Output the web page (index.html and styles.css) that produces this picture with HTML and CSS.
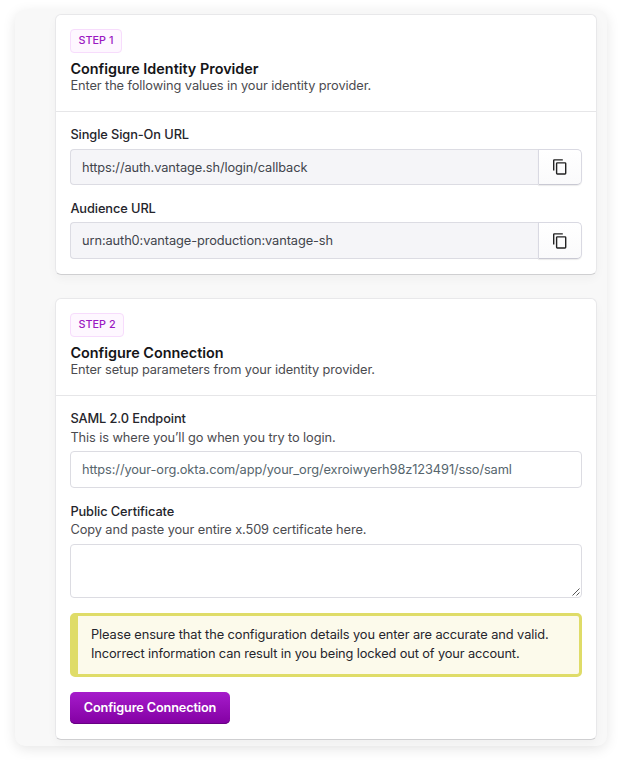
FILE: index.html
```html
<!DOCTYPE html>
<html lang="en">
<head>
<meta charset="utf-8">
<title>Configure SSO</title>
<link rel="stylesheet" href="styles.css">
</head>
<body>
<main class="panel">
  <section class="card">
    <header class="card-head">
      <span class="badge">STEP 1</span>
      <h2>Configure Identity Provider</h2>
      <p>Enter the following values in your identity provider.</p>
    </header>
    <div class="card-body">
      <label class="label">Single Sign-On URL</label>
      <div class="copy-field">
        <div class="value">https://auth.vantage.sh/login/callback</div>
        <button class="copy" type="button" aria-label="Copy"><svg width="16" height="18" viewBox="0 0 16 18" fill="none" stroke="#222" stroke-width="1.4"><path d="M1.7 12.4V2.4Q1.7 1.9 2.2 1.9H10.8"/><rect x="4.6" y="4.9" width="9.1" height="11.1" rx=".7"/></svg></button>
      </div>
      <label class="label second">Audience URL</label>
      <div class="copy-field tall">
        <div class="value">urn:auth0:vantage-production:vantage-sh</div>
        <button class="copy" type="button" aria-label="Copy"><svg width="16" height="18" viewBox="0 0 16 18" fill="none" stroke="#222" stroke-width="1.4"><path d="M1.7 12.4V2.4Q1.7 1.9 2.2 1.9H10.8"/><rect x="4.6" y="4.9" width="9.1" height="11.1" rx=".7"/></svg></button>
      </div>
    </div>
  </section>
  <section class="card">
    <header class="card-head">
      <span class="badge">STEP 2</span>
      <h2>Configure Connection</h2>
      <p>Enter setup parameters from your identity provider.</p>
    </header>
    <div class="card-body">
      <label class="label">SAML 2.0 Endpoint</label>
      <p class="hint">This is where you’ll go when you try to login.</p>
      <div class="input">https://your-org.okta.com/app/your_org/exroiwyerh98z123491/sso/saml</div>
      <label class="label third">Public Certificate</label>
      <p class="hint tight">Copy and paste your entire x.509 certificate here.</p>
      <div class="textarea"><svg width="10" height="10" viewBox="0 0 10 10" stroke="#444" stroke-width=".9"><path d="M1.5 8.5L8.5 1.5M5.5 8.5L8.5 5.5"/></svg></div>
      <div class="alert">Please ensure that the configuration details you enter are accurate and valid.<br><span class="line">Incorrect information can result in you being locked out of your account.</span></div>
      <button class="submit" type="button">Configure Connection</button>
    </div>
  </section>
</main>
</body>
</html>
```
FILE: styles.css
```css
* { box-sizing: border-box; }
body {
  margin: 0;
  padding: 10px 15px 20px;
  background: #fff;
  font-family: Inter, "Liberation Sans", sans-serif;
  font-size: 12.8px;
  letter-spacing: -.09px;
  color: #25252b;
}
h2, p { margin: 0; }
.panel {
  height: 736px;
  padding: 4px 10px 0 40px;
  border-radius: 10px;
  background: #f8f8f8;
  box-shadow: 0 3px 13px rgba(0, 0, 0, .10);
}
.card {
  height: 261px;
  border: 1px solid #e8e8ea;
  border-bottom-color: #cfcfd1;
  border-radius: 6px;
  background: #fff;
  box-shadow: 0 4px 10px rgba(0, 0, 0, .035);
}
.card + .card { height: 442px; margin-top: 23px; }
.card-head {
  height: 97px;
  padding: 14px 14px 0;
  border-bottom: 1px solid #e6e6e8;
}
.badge {
  display: block;
  width: fit-content;
  height: 24px;
  padding: 0 7.5px;
  border: 1px solid #f7dcfc;
  border-radius: 4px;
  background: #fef7ff;
  color: #9a18c2;
  font-size: 10.8px;
  letter-spacing: .03px;
  font-weight: 500;
  line-height: 22px;
}
h2 {
  margin-top: 7px;
  padding-left: .4px;
  color: #151518;
  font-size: 14.4px;
  letter-spacing: 0;
  font-weight: 600;
  line-height: 18px;
}
.card-head p { padding-left: .4px; color: #4b4b50; line-height: 16px; }
.card-body { padding: 14px 14px 0; }
.label { display: block; padding-left: .4px; font-weight: 500; line-height: 18px; }
.copy-field { display: flex; height: 36px; margin-top: 5px; }
.tall { height: 37px; }
.second { margin-top: 15px; }
.second + .copy-field { margin-top: 4px; }
.value {
  flex: 1;
  padding: 0 11px;
  border: 1px solid #dcdce3;
  border-right: 0;
  border-radius: 4px 0 0 4px;
  background: #f5f5f8;
  color: #41444c;
  line-height: 35px;
}
.copy {
  display: flex;
  align-items: center;
  justify-content: center;
  width: 44px;
  padding: 0;
  border: 1px solid #d9d9e2;
  border-bottom-color: #c9c9d3;
  border-radius: 0 5px 5px 0;
  background: linear-gradient(#fff, #fafafb);
  box-shadow: 0 1px 1px rgba(0, 0, 0, .08);
}
.hint { padding: 1px 0 0 .4px; color: #4b4b50; line-height: 18px; }
.hint.tight { padding: 0 0 1px .4px; }
.input {
  height: 37px;
  margin-top: 4px;
  padding: 0 11px;
  border: 1px solid #dcdce2;
  border-radius: 4px;
  color: #56656d;
  line-height: 35px;
}
.third { margin-top: 15px; }
.textarea {
  display: flex;
  align-items: flex-end;
  justify-content: flex-end;
  height: 54px;
  margin-top: 4px;
  border: 1px solid #dcdce2;
  border-radius: 4px;
}
.alert {
  height: 64px;
  margin-top: 15px;
  padding: 9px 13px;
  border: 3px solid #dfdc68;
  border-left-width: 8px;
  border-radius: 5px;
  background: #fcfaeb;
  line-height: 19px;
  letter-spacing: -.08px;
}
.line { letter-spacing: -.115px; }
.submit {
  display: block;
  width: 160px;
  height: 32px;
  margin-top: 15px;
  padding: 0 0 1px;
  border: 0;
  border-radius: 5px;
  background: linear-gradient(#a61ccb, #8300a3);
  box-shadow: inset 0 -1px #680084;
  color: #fff;
  font-family: inherit;
  font-size: 12.7px;
  letter-spacing: -.13px;
  font-weight: 600;
}
```
